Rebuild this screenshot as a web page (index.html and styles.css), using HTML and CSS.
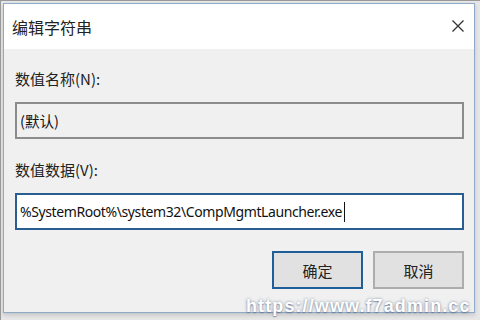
FILE: index.html
```html
<!DOCTYPE html>
<html>
<head>
  <meta charset="utf-8">
  <link rel="stylesheet" href="styles.css">
  <title>编辑字符串</title>
</head>
<body>
  <div class="backdrop">
    <div class="dialog">
      <div class="titlebar">
        <span class="title">编辑字符串</span>
        <svg class="close" width="12" height="12" viewBox="0 0 12 12">
          <path d="M0.5 0.5 L11.5 11.5 M11.5 0.5 L0.5 11.5" stroke="#333" stroke-width="1.3" fill="none"/>
        </svg>
      </div>
      <div class="body">
        <div class="label">数值名称(N):</div>
        <div class="field readonly">(默认)</div>
        <div class="label second">数值数据(V):</div>
        <div class="field active">%SystemRoot%\system32\CompMgmtLauncher.exe<span class="caret"></span></div>
        <div class="buttons">
          <button class="btn primary">确定</button>
          <button class="btn">取消</button>
        </div>
      </div>
    </div>
    <div class="watermark">https://www.f7admin.cc</div>
  </div>
</body>
</html>
```

FILE: styles.css
```css
body {
  margin: 0;
  background-color: #e6e6e6;
  font-family: "Noto Sans", "Noto Sans CJK SC", sans-serif;
}
.backdrop {
  position: relative;
  width: 480px;
  height: 320px;
  padding: 3px 0 0 3px;
  box-sizing: border-box;
  border-top: 1px solid #9a9a9a;
  border-left: 1px solid #9a9a9a;
  overflow: hidden;
}
.dialog {
  width: 470px;
  height: 308px;
  border: 1px solid #8fa9c9;
  background-color: #f0f0f0;
  display: flex;
  flex-direction: column;
  box-shadow: 0 2px 4px rgba(0, 0, 0, 0.15);
  margin-top: -1px;
  margin-left: -1px;
}
.titlebar {
  height: 45px;
  background-color: #ffffff;
  display: flex;
  align-items: center;
  justify-content: space-between;
  padding: 0 10px 0 8px;
}
.title {
  font-family: "Noto Sans CJK SC", sans-serif;
  font-size: 16px;
  color: #222;
}
.close {
  margin-top: -2px;
}
.body {
  padding: 19px 10px 0 11px;
  display: flex;
  flex-direction: column;
}
.label {
  font-family: "Noto Sans CJK SC", sans-serif;
  font-size: 15px;
  color: #222;
  line-height: 22px;
  height: 22px;
}
.label.second {
  margin-top: 20px;
}
.field {
  margin-top: 12px;
  height: 37px;
  box-sizing: border-box;
  padding: 0 3px;
  display: flex;
  align-items: center;
  font-size: 14.6px;
  color: #111;
}
.readonly {
  border: 2px solid #8c8c8c;
  background-color: #f0f0f0;
  font-family: "Noto Sans CJK SC", sans-serif;
}
.active {
  border: 2px solid #2a5e92;
  background-color: #ffffff;
  font-size: 14px;
  letter-spacing: -0.4px;
}
.caret {
  display: inline-block;
  width: 1px;
  height: 20px;
  background-color: #111;
  margin-left: 2px;
}
.buttons {
  display: flex;
  justify-content: flex-end;
  gap: 10px;
  margin-top: 21px;
}
.btn {
  width: 91px;
  height: 38px;
  background-color: #e1e1e1;
  border: 2px solid #adadad;
  font-family: "Noto Sans CJK SC", sans-serif;
  font-size: 15px;
  color: #222;
}
.btn.primary {
  border-color: #1f5f99;
}
.watermark {
  position: absolute;
  left: 245px;
  top: 295px;
  white-space: nowrap;
  font-family: "Liberation Sans", sans-serif;
  font-weight: bold;
  font-size: 18px;
  letter-spacing: 1.1px;
  color: #ffffff;
  text-shadow: 0 0 3px rgba(80, 100, 130, 0.7), 0 1px 1px rgba(80, 100, 130, 0.5);
}
```
